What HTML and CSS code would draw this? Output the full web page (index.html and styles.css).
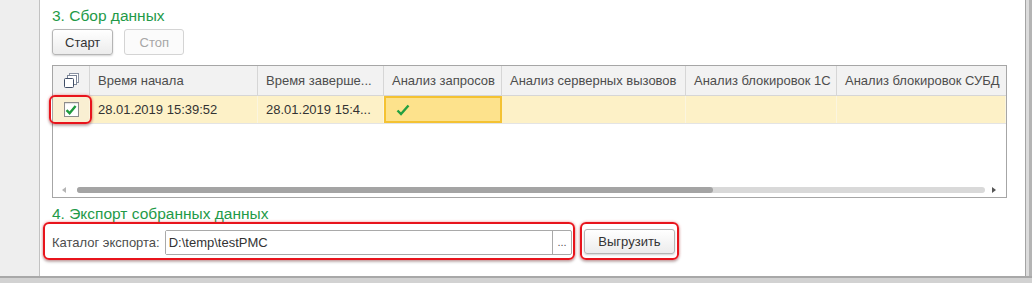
FILE: index.html
```html
<!DOCTYPE html>
<html lang="ru">

<head>
    <meta charset="UTF-8">
    <title>Сбор данных</title>
    <link rel="stylesheet" href="styles.css">
</head>

<body>

    <div class="window">
        <aside class="sidebar"></aside>

        <main class="form">
            <h2 class="section-title title-collect">3. Сбор данных</h2>

            <div class="toolbar">
                <button class="btn btn-start">Старт</button>
                <button class="btn btn-stop" disabled>Стоп</button>
            </div>

            <div class="grid-box">
                <div class="grid-line grid-head">
                    <div class="cell cell-icon">
                        <svg width="15" height="15" viewBox="0 0 15 15">
                            <rect x="5.5" y="0.5" width="9" height="9" fill="#fff" stroke="#8a93a3" />
                            <rect x="3.5" y="2.5" width="9" height="9" fill="#fff" stroke="#7c8698" />
                            <rect x="0.5" y="5.5" width="9" height="9" rx="1" fill="#fff" stroke="#3f4d66" />
                        </svg>
                    </div>
                    <div class="cell">Время начала</div>
                    <div class="cell">Время заверше...</div>
                    <div class="cell">Анализ запросов</div>
                    <div class="cell">Анализ серверных вызовов</div>
                    <div class="cell">Анализ блокировок 1С</div>
                    <div class="cell">Анализ блокировок СУБД</div>
                </div>

                <div class="grid-line grid-row">
                    <div class="cell cell-icon cell-mark">
                        <span class="checkbox">
                            <svg width="12" height="12" viewBox="0 0 12 12">
                                <path d="M1.5 6.2 L4.6 9.2 L10.6 2" fill="none" stroke="#1f9a3e" stroke-width="2.4" />
                            </svg>
                        </span>
                        <span class="mark-frame"></span>
                    </div>
                    <div class="cell">28.01.2019 15:39:52</div>
                    <div class="cell">28.01.2019 15:4...</div>
                    <div class="cell cell-current">
                        <svg width="14" height="12" viewBox="0 0 14 12">
                            <path d="M1.5 6.5 L5 10 L12.5 1.5" fill="none" stroke="#22a040" stroke-width="2.4" />
                        </svg>
                    </div>
                    <div class="cell"></div>
                    <div class="cell"></div>
                    <div class="cell"></div>
                </div>

                <div class="grid-empty"></div>

                <div class="hscroll">
                    <span class="arrow arrow-left"></span>
                    <div class="track">
                        <div class="thumb" style="width: 70%"></div>
                    </div>
                    <span class="arrow arrow-right"></span>
                </div>
            </div>

            <h2 class="section-title title-export">4. Экспорт собранных данных</h2>

            <div class="export-row">
                <div class="mark-box field-group">
                    <label for="exportDir">Каталог экспорта:</label>
                    <div class="field">
                        <input type="text" id="exportDir" value="D:\temp\testPMC">
                        <span class="field-btn">...</span>
                    </div>
                </div>
                <div class="mark-box button-group">
                    <button class="btn btn-export">Выгрузить</button>
                </div>
            </div>
        </main>

        <div class="frame-right"></div>
    </div>
    <div class="frame-bottom"></div>

</body>

</html>
```

FILE: styles.css
```css
body {
    margin: 0;
    width: 1032px;
    height: 283px;
    overflow: hidden;
    font-family: Arial, "Liberation Sans", sans-serif;
    font-size: 13px;
    background-color: #d4d4d4;
}

.window {
    display: flex;
    height: 276px;
}

.sidebar {
    width: 39px;
    background-color: #eeeeee;
    border-right: 1px solid #c2c2c2;
}

.form {
    flex: 1;
    background-color: #ffffff;
    padding-left: 12px;
}

.frame-right {
    width: 7px;
    box-sizing: border-box;
    background-color: #dcdcdc;
    border-left: 1px solid #a4a4a4;
    border-right: 3px solid #b4b4b4;
}

.frame-bottom {
    height: 7px;
    box-sizing: border-box;
    background-color: #d2d2d2;
    border-top: 2px solid #a8a8a8;
}

.section-title {
    margin: 0;
    font-size: 15.5px;
    line-height: 18px;
    font-weight: normal;
    color: #1f9a48;
}

.title-collect {
    padding-top: 7px;
}

.title-export {
    margin-top: 7px;
}

/* buttons */

.toolbar {
    display: flex;
    gap: 11px;
    margin-top: 4px;
}

.btn {
    height: 26px;
    min-width: 60px;
    padding: 0 12px;
    font-family: inherit;
    font-size: 13px;
    color: #333333;
    background: linear-gradient(#ffffff, #ececec);
    border: 1px solid #b5b5b5;
    border-radius: 3px;
    box-shadow: 0 1px 2px rgba(0, 0, 0, 0.18);
}

.btn:disabled {
    color: #a6a6a6;
    background: #fbfbfb;
    border-color: #d4d4d4;
    box-shadow: none;
}

/* table */

.grid-box {
    display: flex;
    flex-direction: column;
    width: 955px;
    height: 133px;
    box-sizing: border-box;
    margin-top: 10px;
    border: 1px solid #a6a6a6;
}

.grid-line {
    display: grid;
    grid-template-columns: 37px 168px 126px 118px 184px 151px 1fr;
}

.cell {
    display: flex;
    align-items: center;
    padding: 0 8px;
    white-space: nowrap;
    overflow: hidden;
}

.grid-head {
    height: 30px;
    background-color: #f2f2f2;
    border-bottom: 1px solid #d6d6d6;
    box-sizing: border-box;
    color: #4d4d4d;
}

.grid-head .cell {
    border-right: 1px solid #d6d6d6;
}

.grid-head .cell:last-child {
    border-right: none;
}

.cell-icon {
    justify-content: center;
    padding: 0;
}

.grid-row {
    height: 28px;
    box-sizing: border-box;
    background-color: #fdf1c7;
    border-bottom: 1px solid #e4e4e4;
    color: #333333;
}

.grid-row .cell {
    border-right: 1px solid #fbf5df;
}

.cell-mark {
    position: relative;
    overflow: visible;
    background-color: #f9efd2;
}

.checkbox {
    display: flex;
    align-items: center;
    justify-content: center;
    width: 13px;
    height: 13px;
    background-color: #ffffff;
    border: 1px solid #8c8c8c;
    box-shadow: inset 0 1px 1px rgba(0, 0, 0, 0.12);
}

.mark-frame {
    position: absolute;
    left: -4px;
    right: -3px;
    top: -1px;
    bottom: -1px;
    border: 2px solid #e8141c;
    border-radius: 6px;
    box-shadow: 0 0 3px rgba(232, 20, 28, 0.45), 0 2px 3px rgba(0, 0, 0, 0.25);
}

.cell-current {
    background-color: #fde28c;
    border: 2px solid #f4c232;
    padding-left: 10px;
}

.grid-row .cell-current {
    border-right: 2px solid #f4c232;
}

.grid-empty {
    flex: 1;
}

.hscroll {
    display: flex;
    align-items: center;
    height: 6px;
    margin-bottom: 4px;
    padding: 0 10px 0 9px;
}

.arrow {
    width: 0;
    height: 0;
    border-top: 3px solid transparent;
    border-bottom: 3px solid transparent;
}

.arrow-left {
    border-right: 4px solid #b5b5b5;
    margin-right: 11px;
}

.arrow-right {
    border-left: 4px solid #555555;
    margin-left: 7px;
}

.track {
    flex: 1;
    height: 6px;
    border-radius: 3px;
    background-color: #d9d9d9;
}

.thumb {
    height: 100%;
    border-radius: 3px;
    background-color: #a4a4a4;
}

/* export */

.export-row {
    display: flex;
    gap: 5px;
    margin-top: -1px;
    margin-left: -9px;
}

.mark-box {
    border: 2px solid #e8141c;
    border-radius: 6px;
    box-shadow: 0 0 3px rgba(232, 20, 28, 0.45), 0 2px 3px rgba(0, 0, 0, 0.25);
}

.field-group {
    display: flex;
    align-items: center;
    gap: 5px;
    width: 532px;
    box-sizing: border-box;
    padding: 5px 1px 3px 7px;
}

.field-group label {
    color: #4d4d4d;
    white-space: nowrap;
}

.field {
    display: flex;
    flex: 1;
    height: 25px;
    box-sizing: border-box;
    border: 1px solid #a9a9a9;
    border-radius: 2px;
}

.field input {
    flex: 1;
    min-width: 0;
    border: none;
    outline: none;
    padding: 0 3px;
    font-family: inherit;
    font-size: 13px;
    color: #333333;
}

.field-btn {
    display: flex;
    align-items: center;
    justify-content: center;
    width: 18px;
    border-left: 1px solid #a9a9a9;
    font-size: 11px;
    color: #555555;
}

.button-group {
    padding: 5px 2px 4px;
}

.btn-export {
    width: 91px;
    height: 25px;
    padding: 0;
}
```
